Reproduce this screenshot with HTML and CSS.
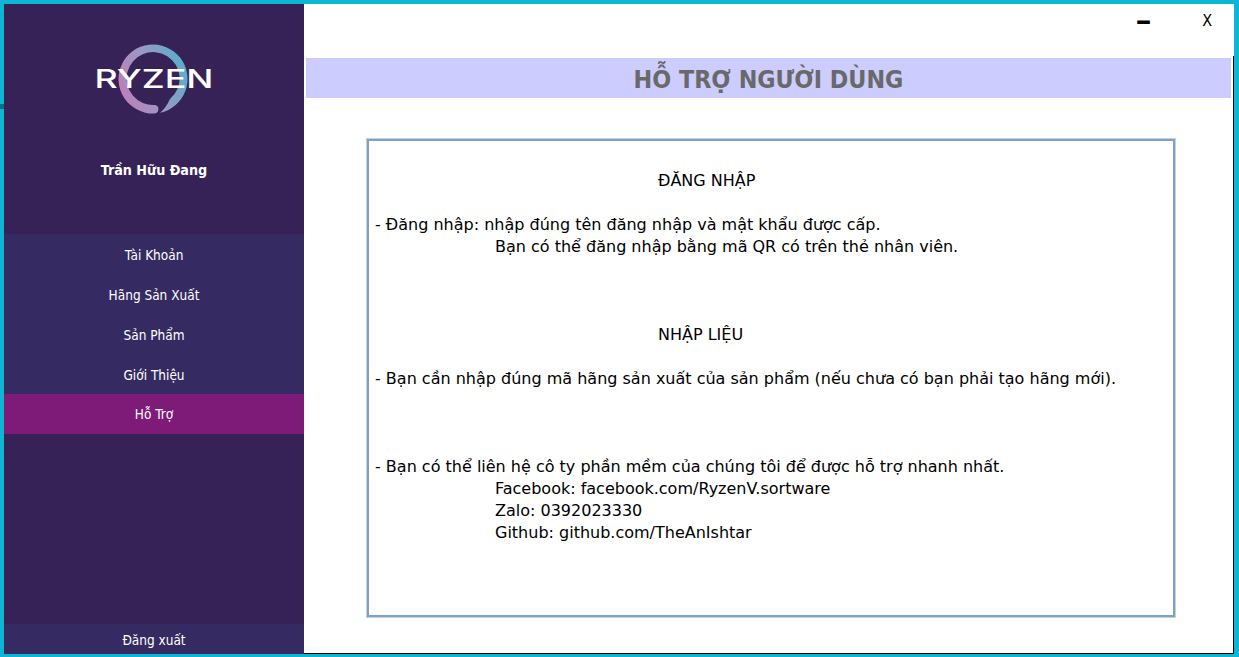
FILE: index.html
```html
<!DOCTYPE html>
<html lang="vi">
<head>
<meta charset="utf-8">
<title>Hỗ trợ người dùng</title>
<link rel="stylesheet" href="styles.css">
</head>
<body>
<div class="app">
  <span class="edge-mark"></span>
  <aside class="sidebar">
    <div class="logo">
      <svg class="logo-svg" width="118" height="72" viewBox="0 0 118 72" aria-label="Ryzen">
        <defs>
          <linearGradient id="ring" x1="0" y1="0.7" x2="1" y2="0.3">
            <stop offset="0" stop-color="#bd7fb6"/>
            <stop offset="0.5" stop-color="#9a98c6"/>
            <stop offset="1" stop-color="#55b0ca"/>
          </linearGradient>
        </defs>
        <path fill="url(#ring)" d="M64 69.800A34.500 34.500 0 1 0 58 70.500A4.300 4.300 0 0 0 59 62A26.500 26.500 0 1 1 74 56Q70 65 64 69.800Z"/>
        <text class="logo-text" x="-1.500" y="44.500" textLength="119" lengthAdjust="spacingAndGlyphs">RYZEN</text>
      </svg>
    </div>
    <div class="user">Trần Hữu Đang</div>
    <nav class="menu">
      <a class="menu-item">Tài Khoản</a>
      <a class="menu-item">Hãng Sản Xuất</a>
      <a class="menu-item">Sản Phẩm</a>
      <a class="menu-item">Giới Thiệu</a>
      <a class="menu-item active">Hỗ Trợ</a>
    </nav>
    <a class="logout">Đăng xuất</a>
  </aside>
  <main class="main">
    <div class="controls">
      <span class="ctl minimize">-</span>
      <span class="ctl close">X</span>
    </div>
    <div class="content">
      <h1 class="title">HỖ TRỢ NGƯỜI DÙNG</h1>
      <section class="box">
        <p class="center">ĐĂNG NHẬP</p>
        <p class="gap1">- Đăng nhập: nhập đúng tên đăng nhập và mật khẩu được cấp.</p>
        <p class="indent">Bạn có thể đăng nhập bằng mã QR có trên thẻ nhân viên.</p>
        <p class="center gap3">NHẬP LIỆU</p>
        <p class="gap1">- Bạn cần nhập đúng mã hãng sản xuất của sản phẩm (nếu chưa có bạn phải tạo hãng mới).</p>
        <p class="gap3">- Bạn có thể liên hệ cô ty phần mềm của chúng tôi để được hỗ trợ nhanh nhất.</p>
        <p class="indent">Facebook: facebook.com/RyzenV.sortware</p>
        <p class="indent">Zalo: 0392023330</p>
        <p class="indent">Github: github.com/TheAnIshtar</p>
      </section>
    </div>
  </main>
</div>
</body>
</html>
```
FILE: styles.css
```css
* { box-sizing: border-box; }
html, body { margin: 0; height: 100%; overflow: hidden; }
body { font-family: "DejaVu Sans Condensed", "DejaVu Sans", sans-serif; font-stretch: condensed; }
.app {
  position: relative;
  display: flex;
  height: 657px;
  padding: 4px 5px 3px 4px;
  background: #0db7d3;
}
.edge-mark {
  position: absolute;
  left: 0;
  top: 104px;
  width: 4px;
  height: 5px;
  background: #0a6f80;
}
.sidebar {
  width: 300px;
  flex: none;
  display: flex;
  flex-direction: column;
  background: #372257;
  color: #fff;
}
.logo { height: 118px; padding: 39px 0 0 92px; }
.logo-svg { display: block; }
.logo-text { font-family: "Inter", sans-serif; font-weight: 500; font-size: 26px; fill: #fff; }
.user {
  margin-top: 36px;
  height: 24px;
  line-height: 24px;
  text-align: center;
  font-weight: 700;
  font-size: 14.200px;
}
.menu { margin-top: 52px; display: flex; flex-direction: column; background: #352b62; }
.menu-item {
  height: 40px;
  line-height: 42px;
  text-align: center;
  font-size: 13.500px;
}
.menu-item.active { background: #7e1b79; line-height: 40px; }
.logout {
  margin-top: auto;
  height: 30px;
  line-height: 33px;
  text-align: center;
  font-size: 13.500px;
  background: #352b62;
}
.main { flex: 1; display: flex; flex-direction: column; background: #fff; min-width: 0; }
.controls {
  height: 52px;
  flex: none;
  display: flex;
  justify-content: flex-end;
  align-items: flex-start;
  padding-right: 22px;
  gap: 54px;
}
.ctl { color: #000; line-height: 20px; margin-top: 7px; font-size: 16px; }
.minimize { font-weight: 700; font-size: 24px; transform: scaleX(1.900); }
.content {
  flex: 1;
  padding: 2px 2px 0;
  border-right: 1px solid #000;
  border-bottom: 1px solid #000;
}
.title {
  margin: 0;
  height: 40px;
  line-height: 43px;
  text-align: center;
  background: #ccccff;
  color: #696969;
  font-size: 24.800px;
  font-weight: 700;
}
.box {
  width: 808px;
  height: 478px;
  margin: 41px 0 0 61px;
  padding: 29px 5px 0 6px;
  border: 2px solid #86a0bc;
  outline: 1px solid #b5d3f2;
  background: #fff;
  color: #000;
  font-family: "DejaVu Sans", sans-serif;
  font-stretch: normal;
  font-size: 16px;
  line-height: 22px;
}
.box p { margin: 0; white-space: nowrap; }
.center { padding-left: 283px; }
.indent { padding-left: 120px; }
.gap1 { margin-top: 22px !important; }
.gap3 { margin-top: 66px !important; }
```
